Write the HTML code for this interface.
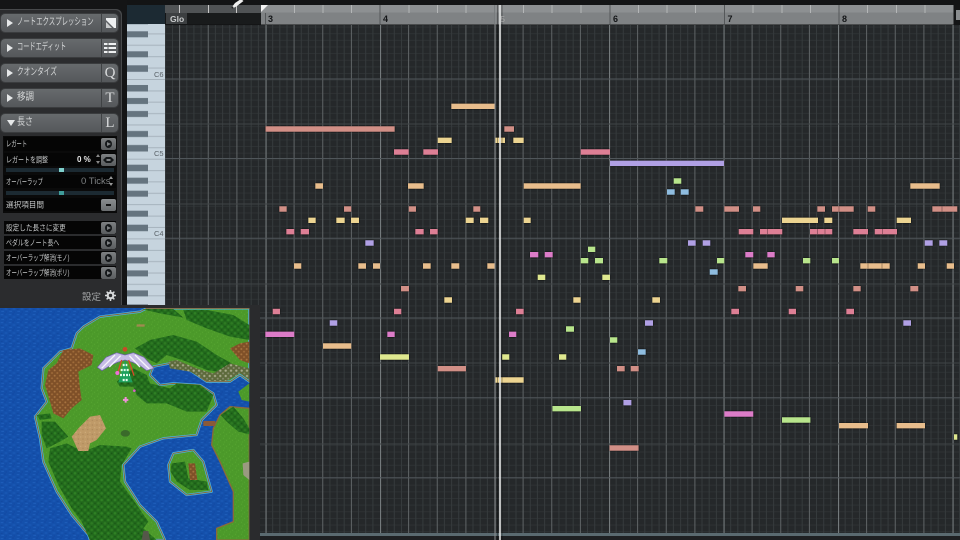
<!DOCTYPE html>
<html><head><meta charset="utf-8"><style>
html,body{margin:0;padding:0;background:#141516}
#r{position:relative;width:960px;height:540px;overflow:hidden;background:#141516;font-family:"Liberation Sans","Noto Sans CJK JP",sans-serif}
#r>*{position:absolute}
.b{left:1px;width:117px;height:18px;border-radius:4px;background:linear-gradient(#666a6c,#54575a);box-shadow:0 0 0 1px #3a3c3e;color:#d4d6d7;font-size:10px;line-height:18px;white-space:nowrap;filter:blur(.3px)}
.b span{position:absolute;left:16px;top:0;transform-origin:left center;transform:scaleX(var(--s,.64))}
.b i{position:absolute;left:6px;top:5px;width:0;height:0;border-left:6px solid #e6e8e9;border-top:4px solid transparent;border-bottom:4px solid transparent}
.b u{position:absolute;left:100px;top:0;width:1px;height:18px;background:#3f4244}
.b b{position:absolute;left:101px;top:0;width:16px;text-align:center;font:normal 15px/18px "Liberation Serif",serif;color:#d8dadb}
.row{left:4px;width:112px;background:#050505;color:#c4c6c7;font-size:8px;white-space:nowrap;filter:blur(.25px)}
.row span{position:absolute;left:2px;top:50%;transform-origin:left center;transform:translateY(-50%) scaleX(var(--s,.7))}
.p{position:absolute;left:97px;top:50%;margin-top:-6px;width:15px;height:12px;border-radius:2px;background:linear-gradient(#7e8183,#5a5d5f)}
.p.c:after{content:"";position:absolute;left:4px;top:2px;width:7px;height:8px;border-radius:50%;background:#15181a}
.p.c:before{content:"";position:absolute;z-index:1;left:6px;top:4px;border-left:4px solid #7e8183;border-top:2px solid transparent;border-bottom:2px solid transparent}
.tr{left:6px;width:108px;height:4px;background:#1c2a32}
.th{width:5px;height:4px;left:59px}
.n{font:bold 9px "Liberation Sans",sans-serif;fill:#141618}
</style></head><body><div id="r">

<!-- left panel -->
<div style="left:0;top:9px;width:122px;height:298px;background:#2b2c2e;border-radius:0 6px 0 0;box-shadow:inset -1px 1px 0 #47494b"></div>

<div class="b" style="top:14px"><i></i><span>ノートエクスプレッション</span><u></u>
<svg style="position:absolute;left:105px;top:4px" width="10" height="10" viewBox="0 0 10 10"><path d="M0 0H10V10H8L0 2Z" fill="#eef0f1"/><path d="M0 4L6 10H0Z" fill="#c8cacb"/></svg></div>
<div class="b" style="top:39px"><i></i><span style="--s:.62">コードエディット</span><u></u>
<svg style="position:absolute;left:102px;top:3px" width="14" height="12" viewBox="0 0 14 12"><path d="M1 2H13M1 6H13M1 10H13" stroke="#eef0f1" stroke-width="2"/><path d="M5 0V12" stroke="#5c5f61" stroke-width="1"/></svg></div>
<div class="b" style="top:64px"><i></i><span style="--s:.67">クオンタイズ</span><u></u><b>Q</b></div>
<div class="b" style="top:89px"><i></i><span style="--s:.85">移調</span><u></u><b>T</b></div>
<div class="b" style="top:114px"><i style="border-top:6px solid #e6e8e9;border-left:4px solid transparent;border-right:4px solid transparent;border-bottom:0;top:6px"></i><span style="--s:.8">長さ</span><u></u><b>L</b></div>

<div style="left:3px;top:136px;width:114px;height:77px;background:#0a0a0a"></div>
<div class="row" style="top:137px;height:14px"><span style="--s:.66">レガート</span><div class="p c"></div></div>
<div class="row" style="top:153px;height:13px"><span style="--s:.75">レガートを調整</span><em style="position:absolute;left:73px;top:2px;font:bold 8px 'Liberation Sans';color:#e8e8e8">0 %</em>
<div style="position:absolute;left:92px;top:1px;width:0;height:0;border-bottom:3px solid #888;border-left:2px solid transparent;border-right:2px solid transparent"></div>
<div style="position:absolute;left:92px;top:8px;width:0;height:0;border-top:3px solid #888;border-left:2px solid transparent;border-right:2px solid transparent"></div>
<div class="p"><svg style="position:absolute;left:2px;top:2px" width="11" height="8" viewBox="0 0 11 8"><path d="M0 4L3 1H8L11 4L8 7H3Z" fill="#15181a"/><path d="M3.5 4H7.5" stroke="#7e8183" stroke-width="2"/></svg></div></div>
<div class="tr" style="top:168px"></div><div class="th" style="position:absolute;top:168px;background:#7fd0cc"></div>
<div class="row" style="top:175px;height:13px"><span style="--s:.66">オーバーラップ</span><em style="position:absolute;left:77px;top:1px;font:normal 9.5px 'Liberation Sans';color:#7d8082">0 Ticks</em>
<div style="position:absolute;left:105px;top:1px;width:0;height:0;border-bottom:3px solid #999;border-left:2px solid transparent;border-right:2px solid transparent"></div>
<div style="position:absolute;left:105px;top:8px;width:0;height:0;border-top:3px solid #999;border-left:2px solid transparent;border-right:2px solid transparent"></div></div>
<div class="tr" style="top:191px"></div><div class="th" style="position:absolute;top:191px;background:#3f9c9a"></div>
<div class="row" style="top:198px;height:13px"><span style="--s:.95">選択項目間</span><div class="p" style="background:linear-gradient(#8a8d8f,#6a6d6f)"><div style="position:absolute;left:5px;top:5px;width:5px;height:2px;background:#111"></div></div></div>
<div class="row" style="top:221px;height:13px"><span style="--s:.83">設定した長さに変更</span><div class="p c"></div></div>
<div class="row" style="top:236px;height:13px"><span style="--s:.74">ペダルをノート長へ</span><div class="p c"></div></div>
<div class="row" style="top:251px;height:13px"><span style="--s:.68">オーバーラップ解消(モノ)</span><div class="p c"></div></div>
<div class="row" style="top:266px;height:13px"><span style="--s:.68">オーバーラップ解消(ポリ)</span><div class="p c"></div></div>
<div style="left:82px;top:289px;font-size:9.5px;color:#a2a4a5;filter:blur(.25px)">設定</div>
<svg style="left:105px;top:290px" width="11" height="11" viewBox="0 0 11 11"><circle cx="5.5" cy="5.5" r="2.8" fill="none" stroke="#d6d8d9" stroke-width="2.2"/><path d="M5.5 0V11M0 5.5H11M1.6 1.6L9.4 9.4M9.4 1.6L1.6 9.4" stroke="#d6d8d9" stroke-width="1.5" stroke-dasharray="2 7 2"/></svg>

<!-- top-left of editor -->
<div style="left:127px;top:5px;width:38px;height:20px;background:#1c2a33"></div>

<!-- main svg -->
<svg style="left:0;top:0" width="960" height="540" viewBox="0 0 960 540">
<defs>
<pattern id="g" patternUnits="userSpaceOnUse" x="265.5" y="0" width="114.5" height="540">
<g stroke="#353a3c" stroke-width="1">
<path d="M7.16 0V540M14.3 0V540M21.5 0V540M35.8 0V540M42.9 0V540M50.1 0V540M64.4 0V540M71.6 0V540M78.7 0V540M93 0V540M100.2 0V540M107.4 0V540"/></g>
<path d="M28.6 0V540M57.25 0V540M85.9 0V540" stroke="#5f6466" stroke-width="1"/>
<path d="M.5 0V540" stroke="#747a7c" stroke-width="1.2"/>
</pattern>
<pattern id="h" patternUnits="userSpaceOnUse" x="0" y="0" width="960" height="6.64"><path d="M0 .5H960" stroke="#2e3234" stroke-width="1"/></pattern>
<pattern id="k" patternUnits="userSpaceOnUse" x="127" y="79" width="38" height="79.7">
<rect width="38" height="79.7" fill="#c6d4de"/>
<path d="M0 .5H38M21 11.9H38M21 23.2H38M21 34.6H38M21 57.4H38M21 68.7H38" stroke="#a6b3bd"/>
<path d="M0 46H38" stroke="#a6b3bd"/>
<g fill="#65747f"><rect y="6" width="21" height="6.5"/><rect y="19" width="21" height="6"/><rect y="32" width="21" height="6"/><rect y="52" width="21" height="6"/><rect y="66" width="21" height="6.5"/></g>
</pattern>
</defs>
<!-- piano -->
<rect x="127" y="24" width="38" height="284" fill="url(#k)"/>
<g font-size="7.5" fill="#5a6268" font-family="Liberation Sans"><text x="154" y="77">C6</text><text x="154" y="156">C5</text><text x="154" y="236">C4</text></g>
<!-- grid -->
<rect x="165" y="25" width="795" height="515" fill="#25282a"/>
<rect x="165" y="25" width="795" height="515" fill="url(#h)"/>
<rect x="165" y="25" width="795" height="515" fill="url(#g)"/>
<path d="M165 79H960M165 158.5H960M165 238.3H960M165 318H960M165 397.7H960M165 477.7H960" stroke="#50565a" stroke-width="1"/>
<path d="M165 124H960M165 204H960M165 284H960M165 363H960M165 444H960" stroke="#3f4446" stroke-width="1"/>
<path d="M249 533H960V536H249Z" fill="#5a6a70"/><rect x="249" y="536" width="711" height="4" fill="#1e2022"/>
<!-- ruler -->
<rect x="165" y="5" width="96" height="8" fill="#505355"/>
<path d="M179.5 5V13M208.5 5V13M236.5 5V13" stroke="#c8c8c8" stroke-width="1"/>
<rect x="166" y="13" width="21" height="11" fill="#3c3f41"/>
<rect x="187" y="13" width="74" height="11" fill="#191b1c"/>
<text x="170" y="22" font-size="8.5" font-weight="bold" fill="#c9cbcc" font-family="Liberation Sans">Glo</text>
<rect x="261" y="5" width="692.5" height="7.5" fill="#8d9092"/>
<rect x="261" y="12.5" width="692.5" height="12" fill="#7f8284"/>
<path d="M294.5 5V13M323 5V13M351.5 5V13M409 5V13M437.5 5V13M466 5V13M523.5 5V13M552 5V13M581 5V13M638.5 5V13M667 5V13M695.5 5V13M753 5V13M782 5V13M810.5 5V13M867.5 5V13M896.5 5V13M925 5V13" stroke="#b4b6b7" stroke-width="1"/>
<path d="M380 5V24M494.7 5V24M610 5V24M724.5 5V24M839 5V24M265.5 13V24" stroke="#55585a" stroke-width="1"/>
<path d="M261 5H268L261 12Z" fill="#f2f2f2"/>
<g class="n"><text x="268" y="22" class="n">3</text><text x="383" y="22" class="n">4</text><text x="613" y="22" class="n">6</text><text x="727.5" y="22" class="n">7</text><text x="842" y="22" class="n">8</text></g>
<rect x="956" y="10" width="4" height="10" fill="#8a8d8f"/>
<!-- notes -->
<g fill="none" stroke-width="5.4" style="filter:drop-shadow(0 0 .8px #000)">
<path stroke="#d18f86" d="M265.5 129H394.7M504.3 129H514M279.3 209H286.7M344 209H351.3M408.7 209H416M473.3 209H480.3M695.3 209H703.3M724.3 209H739M753 209H760.3M817.3 209H825M832 209H853.7M867.7 209H875.3M932.3 209H957.3M401 288.7H409M738.3 288.7H746M795.7 288.7H803.3M853.3 288.7H860.7M910.3 288.7H918.3M437.7 368.7H466M617 368.7H624.7M630.7 368.7H638.7M609.5 448H638.6"/>
<path stroke="#e8bd8c" d="M451.3 106.3H494.7M315.3 186H323M408 186H423.7M523.7 186H580.7M910.3 186H939.7M294 266H301.3M358.3 266H366M373 266H380M423 266H430.7M451.3 266H459.3M487.3 266H494.7M753.3 266H767.7M860.3 266H889.7M917.7 266H925M946.7 266H954M323 346H351.3M839 425.7H868M896.6 425.7H925"/>
<path stroke="#dd7f95" d="M394 152H408.7M423.3 152H438M580.7 152H610M286.3 231.7H294.3M300.7 231.7H309M415.3 231.7H423.7M430 231.7H437.7M738.7 231.7H753.3M760 231.7H782.3M810 231.7H832.3M853.3 231.7H868M874.7 231.7H897M272.7 311.5H280M394 311.5H401.3M516 311.5H523.7M731.3 311.5H739M788.7 311.5H796M846.3 311.5H854"/>
<path stroke="#ecd491" d="M437.7 140.3H451.7M495 140.3H505M513.3 140.3H523.7M308.3 220.3H315.7M336.3 220.3H344.7M351 220.3H359M465.7 220.3H473.7M480 220.3H488.3M523.7 220.3H530.7M782 220.3H818M824.3 220.3H832.3M896.7 220.3H911M444.3 300H452M573.3 300H580.7M652.3 300H660M495 380H523.7"/>
<path stroke="#b0a0e4" d="M610 163.3H724M365.3 243H373.7M688 243H695.7M702.7 243H710.3M924.7 243H932.7M939.3 243H947.3M329.7 323H337.3M645 323H653M903.3 323H911M623.4 402.7H631.4"/>
<path stroke="#b8e58c" d="M673.7 181H681.3M588 249.3H595.3M580.7 260.7H588.3M595 260.7H603M659.3 260.7H667.3M717 260.7H724.3M803 260.7H810.3M832 260.7H839M566 329H574M610 340H617.3M552.4 408.7H581M782 420H810.4"/>
<path stroke="#8fbde0" d="M667 192H674.7M680.7 192H688.7M709.7 272H717.7M638 352H645.7"/>
<path stroke="#dc7cc8" d="M530 254.7H538.3M544.7 254.7H552.7M745.3 254.7H753.3M767.3 254.7H774.7M265.3 334.3H294.3M387.3 334.3H394.7M509 334.3H516.3M724.3 414H753.3"/>
<path stroke="#dfe88f" d="M537.7 277.3H545.3M602.3 277.3H610M380 357H409M502 357H509.3M559 357H566.3M954 437H957.3"/>
</g>
<path d="M839 206.5v5M942 206.5v5M767.5 229v5M817.5 229v5M825 229v5M882.5 229v5M868 263.5v5M882 263.5v5" stroke="#000" stroke-opacity=".3"/>
<!-- playhead -->
<path d="M495 5V540" stroke="#8a8e90" stroke-width="1"/>
<path d="M497.5 5V540M502 5V540" stroke="#000" stroke-opacity=".35"/>
<path d="M500 5V540" stroke="#e4e6e6" stroke-width="1.6"/>
<text x="500.5" y="22" font-size="8" fill="#aaa" font-family="Liberation Sans">5</text>
<!-- top strip over everything -->
<rect x="127" y="0" width="833" height="5" fill="#131415"/>
<path d="M232 7L235 3L241 -1L243.5 1L237 6L233.5 8Z" fill="#f0f0f0"/>
<circle cx="232.5" cy="7.5" r="1" fill="#222"/>
</svg>

<!-- game -->
<svg style="left:0;top:305px;filter:blur(.35px)" width="260" height="235" viewBox="0 0 780 705">
<defs>
<pattern id="w" patternUnits="userSpaceOnUse" width="24" height="24"><rect width="24" height="24" fill="#1450ab"/><path d="M2 5h8M14 12h8M4 19h8" stroke="#2060bc" stroke-width="2.5"/><path d="M12 3h6M2 13h6M16 21h5" stroke="#1147a0" stroke-width="2.5"/></pattern>
<pattern id="l" patternUnits="userSpaceOnUse" width="18" height="18"><rect width="18" height="18" fill="#4c9a2a"/><path d="M3 4h3M12 10h3M6 15h3" stroke="#57a532" stroke-width="2.5"/><path d="M11 3h2M2 11h2" stroke="#438f26" stroke-width="2.5"/></pattern>
<pattern id="f" patternUnits="userSpaceOnUse" width="20" height="20"><rect width="20" height="20" fill="#226a1c"/><circle cx="5" cy="5" r="4" fill="#2f8024"/><circle cx="15" cy="15" r="4" fill="#2d7a22"/><circle cx="15" cy="5" r="2.5" fill="#1a5815"/><circle cx="5" cy="15" r="2.5" fill="#1a5815"/></pattern>
<pattern id="m" patternUnits="userSpaceOnUse" width="16" height="16"><rect width="16" height="16" fill="#7f5028"/><circle cx="4" cy="4" r="3" fill="#a87440"/><circle cx="12" cy="12" r="3" fill="#a06c3a"/></pattern>
<pattern id="s" patternUnits="userSpaceOnUse" width="14" height="14"><rect width="14" height="14" fill="#bf9a68"/><circle cx="4" cy="4" r="2" fill="#cfae7e"/><circle cx="11" cy="10" r="2" fill="#ab875a"/></pattern>
<pattern id="r2" patternUnits="userSpaceOnUse" width="16" height="16"><rect width="16" height="16" fill="#5d6a3c"/><circle cx="5" cy="5" r="3.5" fill="#a8ab8c"/><circle cx="13" cy="13" r="3" fill="#8a8e70"/></pattern>
<clipPath id="c"><rect x="0" y="9" width="748" height="696"/></clipPath>
</defs>
<rect width="780" height="705" fill="#2a2b2d"/>
<g clip-path="url(#c)">
<rect width="748" height="705" fill="url(#w)"/>
<g stroke-linejoin="round">
<path d="M230 85L215 130L180 140L130 190L125 250L140 290L105 335L120 400L130 470L170 560L215 630L265 690L270 705H495L470 650L420 600L375 530L370 480L420 425L490 400L590 390L605 345L650 300L640 265L600 240L520 235L480 240L450 210L460 185L510 175L560 190L620 230L690 230L720 210L748 230V10H440L420 20L300 35L250 65Z" fill="url(#l)" stroke="#45b6ea" stroke-width="7"/>
<path d="M230 85L215 130L180 140L130 190L125 250L140 290L105 335L120 400L130 470L170 560L215 630L265 690L270 705H495L470 650L420 600L375 530L370 480L420 425L490 400L590 390L605 345L650 300L640 265L600 240L520 235L480 240L450 210L460 185L510 175L560 190L620 230L690 230L720 210L748 230V10H440L420 20L300 35L250 65Z" fill="none" stroke="#8a6a3a" stroke-width="3"/>
<path d="M748 310L690 305L660 330L640 370L635 420L660 470L700 560L700 650L650 670L650 705H748Z" fill="url(#l)" stroke="#8a6a3a" stroke-width="4"/>
<path d="M520 445L580 435L610 470L635 560L560 570L510 530L505 480Z" fill="url(#l)" stroke="#45b6ea" stroke-width="7"/>
<path d="M520 445L580 435L610 470L635 560L560 570L510 530L505 480Z" fill="none" stroke="#8a6a3a" stroke-width="3"/>
<path d="M715 260L748 235V290L725 285Z" fill="url(#l)"/>
</g>
<path fill="url(#f)" d="M405 130L450 105L520 90L590 110L650 150L695 175L685 205L620 195L560 170L500 150L470 175L440 160ZM350 230L400 190L440 210L450 235L510 250L530 235L600 240L640 270L620 320L560 320L500 295L440 295L410 270L400 245L360 245ZM550 15L620 15L700 30L748 60V105L690 95L620 70L560 45ZM425 12L520 12L550 38L480 25ZM662 330L700 305L730 340L748 370V388L715 380L680 350ZM125 350L165 350L205 395L180 410L140 430L125 390ZM110 330L150 325L155 340L120 345ZM150 430L200 415L250 440L300 420L380 425L395 430L365 480L360 530L400 585L445 650L430 670L470 705H270L245 650L215 610L175 540L145 470ZM515 475L555 470L565 520L620 530L625 555L570 555L530 530L512 500Z"/>
<path fill="url(#m)" d="M190 135L240 130L280 150L275 180L235 200L240 250L245 285L215 310L190 340L160 325L150 290L135 240L145 195L170 175ZM690 130L720 115L748 110V175L720 165Z"/>
<path fill="url(#s)" d="M270 335L300 330L318 370L290 405L270 415L265 438H235L215 395L235 370Z"/>
<path fill="url(#m)" d="M565 475L585 475L592 525L570 525Z"/>
<path fill="url(#r2)" d="M505 170L530 165L590 190L640 205L690 175L748 190V225L720 205L680 228L620 228L570 200L510 190Z"/>
<ellipse cx="376" cy="385" rx="14" ry="10" fill="#3a6a2a"/>
<rect x="610" y="348" width="36" height="15" fill="#8a5a3a"/>
<path d="M728 475L748 470V525L730 510Z" fill="#9a9a80"/>
<path d="M425 705L430 678L445 678L450 705Z" fill="#55584a"/>
<rect x="410" y="58" width="24" height="7" fill="#a08a50"/>
<!-- bird -->
<path d="M292 187L318 157L350 143L375 150L400 143L432 157L462 190L440 197L420 182L398 172L375 165L352 172L330 182L306 197Z" fill="#c6bce6" stroke="#6c5fa8" stroke-width="2"/>
<path d="M345 150L305 190M362 152L328 186M388 152L420 186M405 150L448 192" stroke="#f6f4fc" stroke-width="4"/>
<path d="M375 165L355 232H398Z" fill="#1ea05e"/>
<path d="M368 180h14M362 195h26M360 210h30M368 225h16" stroke="#e0fbe8" stroke-width="7" stroke-dasharray="6 3"/>
<path d="M365 165L352 208M386 165L402 212" stroke="#d84a28" stroke-width="4"/>
<circle cx="375" cy="133" r="7" fill="#c84a28"/>
<circle cx="352" cy="204" r="6" fill="#ef6fd8"/>
<circle cx="403" cy="257" r="4" fill="#d860c8"/>
<path d="M377 276V293M369 284.5H385" stroke="#f090d8" stroke-width="6"/>
</g>
</svg>
</div></body></html>
